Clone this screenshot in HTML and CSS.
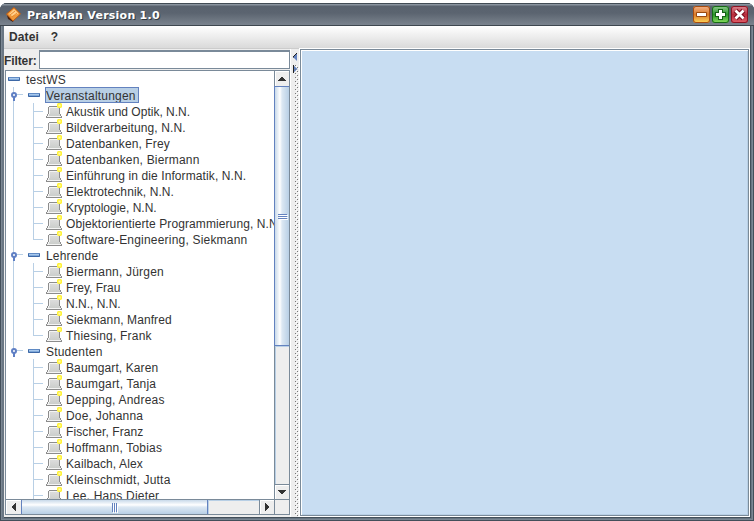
FILE: index.html
```
<!DOCTYPE html>
<html lang="de">
<head>
<meta charset="utf-8">
<title>PrakMan Version 1.0</title>
<link rel="stylesheet" href="styles.css">
</head>
<body>
<svg class="defs" width="0" height="0">
  <defs>
    <linearGradient id="steel" x1="0" y1="0" x2="0" y2="1"><stop offset="0" stop-color="#dedede"/><stop offset="1" stop-color="#c9ccc9"/></linearGradient>
    <symbol id="item" viewBox="0 0 16 16">
      <path d="M2 4H3V3H13V4H14V11H15V13H16V15H0V13H1V11H2Z" fill="#8c8c8c"/>
      <path d="M3 4H13V11H14V13H15V14H1V13H2V11H3Z" fill="url(#steel)"/>
      <path d="M1 13.500H15M3.500 11V4.500H12M2.500 11V13" fill="none" stroke="#f4f4f4"/>
      <path d="M11 1L12 0H15L16 1V4L15 5H12L11 4Z" fill="#fff23a"/><path d="M12.500 1.500H14.500V3.500H12.500Z" fill="#fffbb0"/>
    </symbol>
    <symbol id="bar" viewBox="0 0 12 4">
      <rect width="12" height="4" rx=".8" fill="#3d68a6"/><path d="M1 .5H11" stroke="#5f8ac4"/><path d="M1 1.500H11" stroke="#a8c8ec"/><path d="M1 2.500H11" stroke="#7ea8da"/>
    </symbol>
    <symbol id="handle" viewBox="0 0 12 10">
      <path d="M6 2.500H12" stroke="#b8cfe5"/><path d="M3 5V9" stroke="#5f7fc4" stroke-width="2"/>
      <circle cx="3" cy="3" r="2" fill="#fff" stroke="#5f7fc4" stroke-width="2"/>
    </symbol>
    <pattern id="bumps" width="4" height="4" patternUnits="userSpaceOnUse">
      <path d="M0 0H1V1H0ZM2 2H3V3H2Z" fill="#777"/><path d="M1 1H2V2H1ZM3 3H4V4H3Z" fill="#fff"/>
    </pattern>
  </defs>
</svg>
<div class="window">
  <header class="titlebar">
    <svg class="logo" width="16" height="16" viewBox="0 0 16 16"><path d="M1 8L2 12L7 15L8 12Z" fill="#4a2410"/><path d="M8 0.500L14.500 7L7 14L0.500 7Z" fill="#f09a3c" stroke="#c05a10"/><path d="M8 2L12.500 6.500L6 9L3 7Z" fill="#ffcf8c"/><path d="M4 8L9 4M6 10L11 6" stroke="#e88a30"/></svg>
    <h1>PrakMan Version 1.0</h1>
    <div class="controls">
      <svg class="ctl min" width="17" height="17" viewBox="0 0 17 17"><rect x="3" y="6" width="11" height="5" rx="1" fill="#9a4a10"/><rect x="4" y="7" width="9" height="3" fill="#fff"/></svg>
      <svg class="ctl max" width="17" height="17" viewBox="0 0 17 17"><path d="M6 3H11V6H14V11H11V14H6V11H3V6H6Z" fill="#156015"/><path d="M7 4H10V7H13V10H10V13H7V10H4V7H7Z" fill="#fff"/></svg>
      <svg class="ctl close" width="17" height="17" viewBox="0 0 17 17"><path d="M4.500 4.500L12.500 12.500M12.500 4.500L4.500 12.500" stroke="#7c1020" stroke-width="5"/><path d="M4.500 4.500L12.500 12.500M12.500 4.500L4.500 12.500" stroke="#fff" stroke-width="2.600"/></svg>
    </div>
  </header>
  <div class="client">
    <nav class="menubar"><span>Datei</span><span>?</span></nav>
    <div class="split">
      <aside class="side">
        <div class="filter"><label for="f">Filter:</label><input id="f" type="text"></div>
        <div class="scroll">
          <div class="tree">
            <div class="node root"><svg class="bar"><use href="#bar"/></svg><span>testWS</span></div>
            <section class="group">
              <div class="node branch"><svg class="handle"><use href="#handle"/></svg><svg class="bar"><use href="#bar"/></svg><span class="selected">Veranstaltungen</span></div>
              <ul>
                <li><svg><use href="#item"/></svg><span class="tight">Akustik und Optik, N.N.</span></li>
                <li><svg><use href="#item"/></svg><span class="snug">Bildverarbeitung, N.N.</span></li>
                <li><svg><use href="#item"/></svg><span class="snug">Datenbanken, Frey</span></li>
                <li><svg><use href="#item"/></svg><span>Datenbanken, Biermann</span></li>
                <li><svg><use href="#item"/></svg><span class="snug">Einführung in die Informatik, N.N.</span></li>
                <li><svg><use href="#item"/></svg><span class="snug">Elektrotechnik, N.N.</span></li>
                <li><svg><use href="#item"/></svg><span class="tight">Kryptologie, N.N.</span></li>
                <li><svg><use href="#item"/></svg><span class="snug">Objektorientierte Programmierung, N.N.</span></li>
                <li><svg><use href="#item"/></svg><span>Software-Engineering, Siekmann</span></li>
              </ul>
            </section>
            <section class="group">
              <div class="node branch"><svg class="handle"><use href="#handle"/></svg><svg class="bar"><use href="#bar"/></svg><span>Lehrende</span></div>
              <ul>
                <li><svg><use href="#item"/></svg><span>Biermann, Jürgen</span></li>
                <li><svg><use href="#item"/></svg><span class="tight">Frey, Frau</span></li>
                <li><svg><use href="#item"/></svg><span class="tight">N.N., N.N.</span></li>
                <li><svg><use href="#item"/></svg><span class="snug">Siekmann, Manfred</span></li>
                <li><svg><use href="#item"/></svg><span>Thiesing, Frank</span></li>
              </ul>
            </section>
            <section class="group last">
              <div class="node branch"><svg class="handle"><use href="#handle"/></svg><svg class="bar"><use href="#bar"/></svg><span>Studenten</span></div>
              <ul>
                <li><svg><use href="#item"/></svg><span class="snug">Baumgart, Karen</span></li>
                <li><svg><use href="#item"/></svg><span>Baumgart, Tanja</span></li>
                <li><svg><use href="#item"/></svg><span>Depping, Andreas</span></li>
                <li><svg><use href="#item"/></svg><span>Doe, Johanna</span></li>
                <li><svg><use href="#item"/></svg><span class="snug">Fischer, Franz</span></li>
                <li><svg><use href="#item"/></svg><span>Hoffmann, Tobias</span></li>
                <li><svg><use href="#item"/></svg><span class="snug">Kailbach, Alex</span></li>
                <li><svg><use href="#item"/></svg><span>Kleinschmidt, Jutta</span></li>
                <li class="more"><svg><use href="#item"/></svg><span>Lee, Hans Dieter</span></li>
              </ul>
            </section>
          </div>
          <div class="vbar">
            <div class="btn up"><svg width="8" height="4"><path d="M3 0H5V1H6V2H7V3H8V4H0V3H1V2H2V1H3Z"/></svg></div>
            <div class="vthumb"><i></i><i></i><i></i></div>
            <div class="vtrack"></div>
            <div class="btn down"><svg width="8" height="4"><path d="M0 0H8V1H7V2H6V3H5V4H3V3H2V2H1V1H0Z"/></svg></div>
          </div>
          <div class="hbar">
            <div class="btn left"><svg width="4" height="8"><path d="M4 0V8H3V7H2V6H1V5H0V3H1V2H2V1H3V0Z"/></svg></div>
            <div class="hthumb"><i></i><i></i><i></i></div>
            <div class="htrack"></div>
            <div class="btn right"><svg width="4" height="8"><path d="M0 0V8H1V7H2V6H3V5H4V3H3V2H2V1H1V0Z"/></svg></div>
          </div>
          <div class="corner"></div>
        </div>
      </aside>
      <div class="divider">
        <svg class="arrows" width="5" height="20" viewBox="0 0 5 20"><path d="M4 0V8L0 4Z" fill="#6382bf"/><path d="M4 0L0 4V5" fill="none" stroke="#222"/><path d="M0 12V20L4.500 16Z" fill="#6382bf"/><path d="M.5 12V20" stroke="#222"/></svg>
        <svg class="dots"><rect width="4" height="100%" fill="url(#bumps)"/></svg>
      </div>
      <main class="desktop"></main>
    </div>
  </div>
</div>
</body>
</html>
```
FILE: styles.css
```
* { box-sizing: border-box; }
body { margin: 0; background: #fff; font-family: "Liberation Sans", Arial, sans-serif; font-size: 12px; color: #333; overflow: hidden; }
.defs { display: block; height: 0; }
.window { height: 518px; margin-top: 3px; display: flex; flex-direction: column; padding: 0 3px 3px 4px; border-radius: 7px 7px 0 0; background: #697683; box-shadow: inset 0 0 0 1px #434f5a, inset 0 0 0 2px #7b8793; }
.titlebar { height: 23px; flex: none; display: flex; align-items: center; margin: 0 -3px 0 -4px; padding: 0 6px; border-radius: 7px 7px 0 0; background: linear-gradient(#424c55 0 1px, #89939e 1px 2px, #59626e 3px, #5b6470 10px, #7a838e 22px, #3e474f 22px); }
.logo { flex: none; }
h1 { flex: 1; margin: 2px 0 0 5px; font: bold 11px "DejaVu Sans", sans-serif; letter-spacing: .25px; color: #fff; text-shadow: 1px 1px #343b43; }
.controls { display: flex; gap: 2px; }
.ctl { border-radius: 3px; }
.min { background: linear-gradient(#f3b28a, #d97a28 50%, #ffd75a); box-shadow: inset 0 0 0 1px #a84d10; }
.max { background: linear-gradient(#8fca8f, #289428 50%, #8ae060); box-shadow: inset 0 0 0 1px #176a17; }
.close { background: linear-gradient(#dc8a94, #b82c3c 50%, #e2606a); box-shadow: inset 0 0 0 1px #8c1424; }
.client { flex: 1; min-height: 0; display: flex; flex-direction: column; background: #eee; border: solid #434f5a; border-width: 0 1px 1px 0; }
.menubar { height: 23px; flex: none; display: flex; gap: 12px; padding: 0 5px; line-height: 22px; font-weight: bold; letter-spacing: .1px; background: linear-gradient(#fff, #dadada); border-bottom: 1px solid #ccc; }
.split { flex: 1; min-height: 0; display: grid; grid-template-columns: 286px 10px 1fr; background: #eee; }
.side { display: flex; flex-direction: column; min-width: 0; padding-top: 1px; }
.filter { height: 20px; flex: none; display: flex; font-weight: bold; }
.filter label { width: 35px; line-height: 22px; white-space: nowrap; letter-spacing: -.1px; }
.filter input { flex: 1; min-width: 0; height: 19px; padding: 0; border: 1px solid #7a8a99; box-shadow: inset 0 1px #7a8a99; background: #fff; }
.scroll { flex: 1; min-height: 0; display: grid; grid-template: 428px 16px / 268px 15px; margin: 0 0 2px 1px; border: 1px solid #7a8a99; border-bottom: 0; }
.tree { overflow: hidden; background: #fff; white-space: nowrap; line-height: 18px; letter-spacing: .2px; }
.tight { letter-spacing: 0; }
.snug { letter-spacing: .1px; }
.node { height: 16px; display: flex; align-items: center; }
.bar { width: 12px; height: 4px; flex: none; }
.root { padding-left: 2px; gap: 6px; }
.root span { height: 16px; line-height: 18px; }
.group { background: linear-gradient(#b8cfe5, #b8cfe5) 7px 0 / 1px 100% no-repeat; }
.group.last { background-size: 1px 8px; }
.branch { padding-left: 5px; }
.handle { width: 12px; height: 10px; flex: none; margin: 4px 5px 0 0; }
.branch span { margin-left: 5px; padding: 0 2px 0 1px; height: 16px; line-height: 18px; }
.branch .selected { background: #b8cfe5; outline: 1px solid #6382bf; outline-offset: -1px; padding: 0 3px 0 1px; }
ul { list-style: none; margin: 0; padding: 0 0 0 27px; }
li { height: 16px; display: flex; background: linear-gradient(#b8cfe5, #b8cfe5) 0 0 / 1px 16px no-repeat, linear-gradient(#b8cfe5, #b8cfe5) 0 8px / 10px 1px no-repeat; }
li:last-child:not(.more) { background-size: 1px 8px, 10px 1px; }
li svg { width: 16px; height: 16px; flex: none; margin: 0 4px 0 13px; }
.vbar { display: flex; flex-direction: column; border-left: 1px solid #7a8a99; }
.hbar { display: flex; border-top: 1px solid #7a8a99; border-bottom: 1px solid #7a8a99; }
.btn { flex: none; display: flex; align-items: center; justify-content: center; background: #eee; box-shadow: inset 1px 1px #fff; fill: #333; }
.up { height: 15px; }
.down { height: 15px; border-top: 1px solid #7a8a99; }
.left { width: 15px; }
.right { width: 15px; border-left: 1px solid #7a8a99; }
.vthumb { height: 260px; flex: none; margin-left: -1px; display: flex; flex-direction: column; align-items: center; justify-content: center; gap: 1px; border: solid #6382bf; border-width: 1px 0 1px 1px; background: linear-gradient(90deg, #c8d9e9, #fff 35%, #dce8f3 50%, #b8cfe5); }
.vthumb i { width: 9px; height: 1px; background: #6382bf; box-shadow: 1px 1px #fff; }
.vtrack { flex: 1; box-shadow: inset 1px 1px #b8cfe5; background: #eee; }
.hthumb { width: 187px; flex: none; display: flex; align-items: center; justify-content: center; gap: 1px; border: solid #6382bf; border-width: 0 1px; background: linear-gradient(#c8d9e9, #fff 35%, #dce8f3 50%, #b8cfe5); }
.hthumb i { width: 1px; height: 9px; background: #6382bf; box-shadow: 1px 1px #fff; }
.htrack { flex: 1; box-shadow: inset 1px 1px #b8cfe5; background: #eee; }
.corner { border: solid #7a8a99; border-width: 1px 0 1px 1px; }
.divider { padding: 4px 0 0 2px; display: flex; flex-direction: column; background: #eee; border-left: 1px solid #fff; }
.arrows { flex: none; }
.dots { flex: 1; min-height: 0; width: 4px; margin: -8px 0 0 2px; }
.desktop { background: #c8ddf2; border: 1px solid #7a8a99; box-shadow: inset 1px 1px #fff, inset -1px -1px #b8cfe5; margin: 0 1px 1px 0; outline: 1px solid #fff; }
```
